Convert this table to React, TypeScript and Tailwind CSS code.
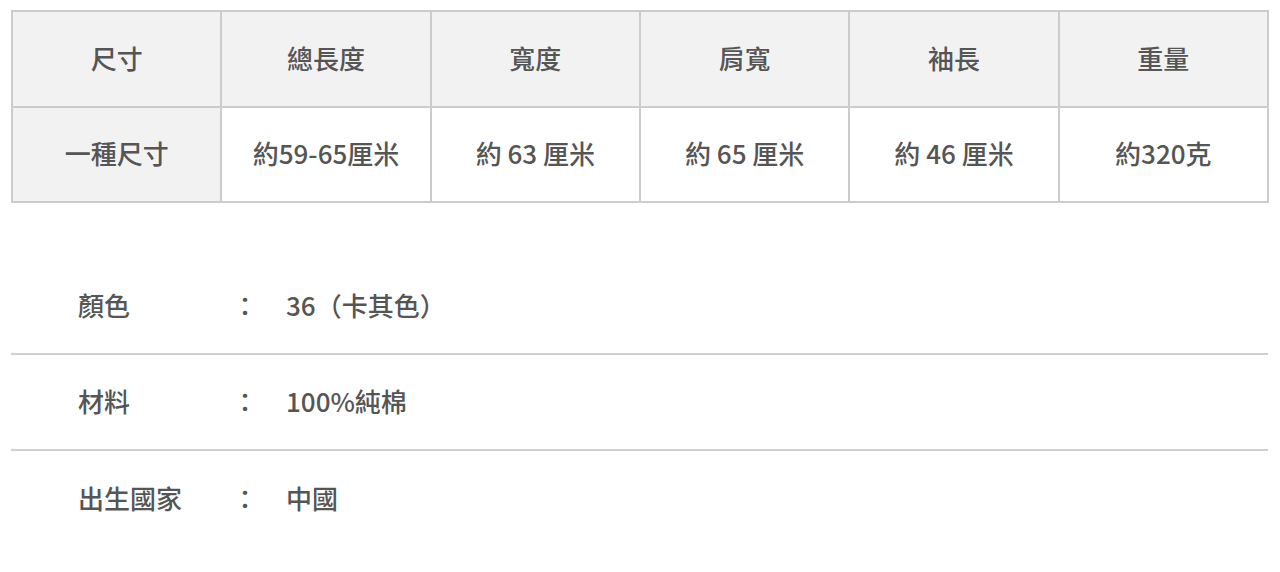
import React from "react";

const font = { fontFamily: '"Noto Sans CJK TC", "Noto Sans", sans-serif' };

const headers = ["尺寸", "總長度", "寬度", "肩寬", "袖長", "重量"];
const values = ["一種尺寸", "約59-65厘米", "約 63 厘米", "約 65 厘米", "約 46 厘米", "約320克"];

const specs = [
  ["顏色", "36（卡其色）"],
  ["材料", "100%純棉"],
  ["出生國家", "中國"],
];

export default function App() {
  return (
    <div className="w-[1280px] h-[572px] bg-white px-[11px] pt-[10px] text-[#555] font-medium" style={font}>
      <table className="w-[1258px] table-fixed border-collapse border-2 border-[#cccccc] text-[26px]">
        <tbody>
          <tr className="h-[96px] bg-[#f2f2f2]">
            {headers.map((h) => (
              <td key={h} className="border-2 border-[#cccccc] pb-[4px] text-center align-middle">
                {h}
              </td>
            ))}
          </tr>
          <tr className="h-[95px]">
            {values.map((v, i) => (
              <td
                key={v}
                className={
                  i === 0
                    ? "border-2 border-[#cccccc] pb-[4px] text-center align-middle bg-[#f2f2f2]"
                    : "border-2 border-[#cccccc] pb-[4px] text-center align-middle bg-white"
                }
              >
                {v}
              </td>
            ))}
          </tr>
        </tbody>
      </table>
      <div className="mt-[56px] w-[1257px] text-[26px]">
        {specs.map(([k, v], i) => (
          <div
            key={k}
            className={
              i < specs.length - 1
                ? "flex h-[96px] items-center pb-[4px] border-b-2 border-[#d0d0d0]"
                : "flex h-[96px] items-center pb-[4px]"
            }
          >
            <div className="w-[221px] pl-[67px]">{k}</div>
            <div className="w-[54px]">：</div>
            <div>{v}</div>
          </div>
        ))}
      </div>
    </div>
  );
}
